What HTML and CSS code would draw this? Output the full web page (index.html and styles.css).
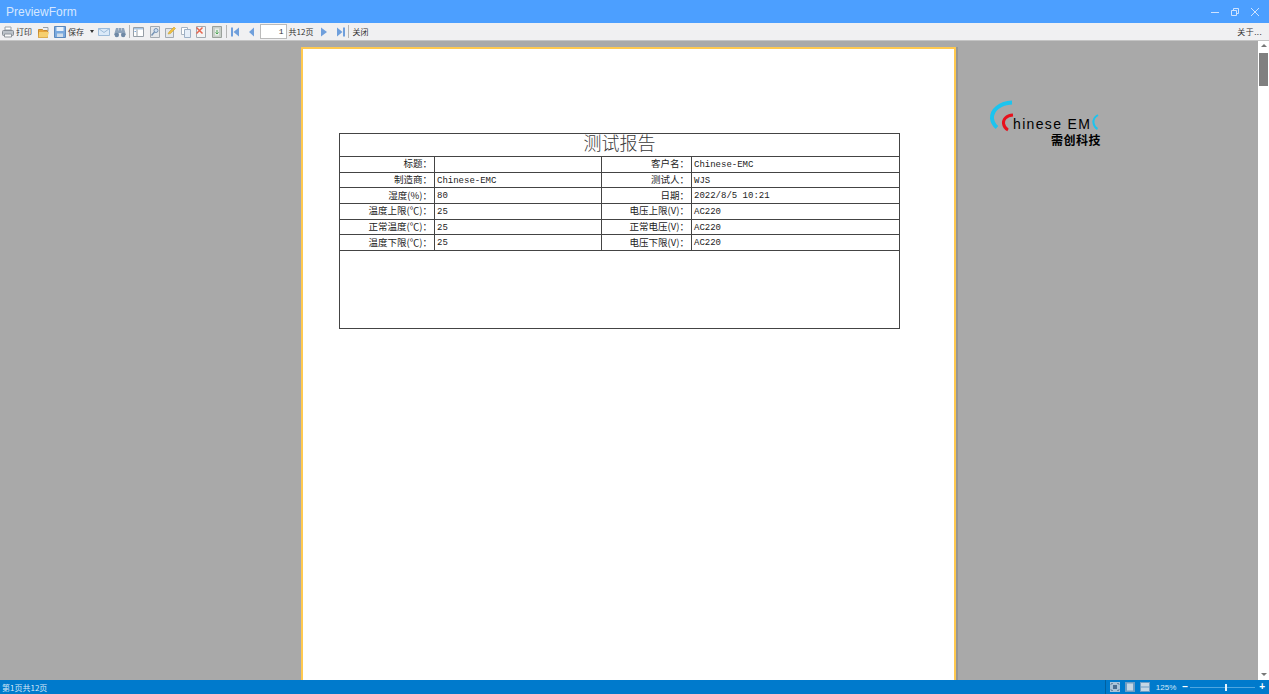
FILE: index.html
```html
<!DOCTYPE html>
<html lang="zh-CN">
<head>
  <meta charset="UTF-8">
  <meta name="viewport" content="width=device-width, initial-scale=1.0">
  <title>PreviewForm</title>
  <link rel="stylesheet" href="styles.css">
</head>
<body>
  <!-- 标题栏 -->
  <header class="title-bar">
    <span class="title-text">PreviewForm</span>
    <div class="win-btns">
      <svg width="10" height="10" viewBox="0 0 10 10"><path d="M1 5.500h8" stroke="#cfe3ff" fill="none"/></svg>
      <svg width="10" height="10" viewBox="0 0 10 10"><path d="M1.500 3.500h5v5h-5zM3.500 3.500v-2h5v5h-2" stroke="#cfe3ff" fill="none"/></svg>
      <svg width="10" height="10" viewBox="0 0 10 10"><path d="M1 1l8 8M9 1l-8 8" stroke="#cfe3ff" fill="none"/></svg>
    </div>
  </header>

  <!-- 工具栏 -->
  <nav class="toolbar">
    <div class="tb-btn tb-label">
      <svg width="12" height="12" viewBox="0 0 12 12"><path d="M3 1h6v3H3z" fill="#fff" stroke="#9aa0a6"/><rect x=".5" y="4.500" width="11" height="5" rx="1" fill="#bcc2c9" stroke="#868d95"/><path d="M2.500 8h7v3h-7z" fill="#f8f8f8" stroke="#8f959c"/></svg>
      <span>打印</span>
    </div>
    <div class="tb-btn">
      <svg width="12" height="12" viewBox="0 0 12 12"><path d="M.5 3.500h4l1 1h4v7h-9z" fill="#e8a33a" stroke="#c58a30"/><path d="M5 1.500h5v4" fill="none" stroke="#9aa0a6"/><path d="M1 6h10l-1.500 5.500h-9z" fill="#f6cf6f"/></svg>
    </div>
    <div class="tb-btn tb-label">
      <svg width="12" height="12" viewBox="0 0 12 12"><path d="M.5.500h11v11H.5z" fill="#7aa9de" stroke="#5a88bd"/><path d="M2.500 1h7v4h-7z" fill="#e9f1fa"/><path d="M3 7.500h6V11H3z" fill="#cfdcea"/></svg>
      <span>保存</span>
    </div>
    <div class="tb-btn tb-arrow"><span class="tri-down"></span></div>
    <div class="tb-btn">
      <svg width="12" height="12" viewBox="0 0 12 12"><path d="M.5 2.500h11v7H.5z" fill="#dbe9f8" stroke="#9dbbd9"/><path d="M.5 2.500L6 6.500l5.500-4" fill="none" stroke="#9dbbd9"/></svg>
    </div>
    <div class="tb-btn">
      <svg width="12" height="12" viewBox="0 0 12 12"><path d="M2 2h2.500v2.500H5V2h2v2.500h.5V2H10l2 7H7.500V7h-3v2H0z" fill="#8ea3bb"/><circle cx="2.800" cy="9" r="2.200" fill="#6f88a5"/><circle cx="9.200" cy="9" r="2.200" fill="#6f88a5"/></svg>
    </div>
    <span class="tb-sep"></span>
    <div class="tb-group">
      <div class="tb-btn">
        <svg width="12" height="12" viewBox="0 0 12 12"><path d="M.5 1.500h10v9H.5z" fill="#fff" stroke="#969ea6"/><path d="M1 2h9v1.500H1z" fill="#a9c6e4"/><path d="M4 3.500v7" stroke="#969ea6"/><path d="M1.500 5h1.500v1H1.500z" fill="#7aa9de"/></svg>
      </div>
      <div class="tb-btn">
        <svg width="12" height="12" viewBox="0 0 12 12"><path d="M1.500.500h9v11h-9z" fill="#e4e7ea" stroke="#a3aab1"/><circle cx="7" cy="4.500" r="2" fill="#cfe0f2" stroke="#7593b5"/><path d="M5.500 6L2.500 9.500" stroke="#7593b5" stroke-width="1.500"/></svg>
      </div>
      <div class="tb-btn">
        <svg width="12" height="12" viewBox="0 0 12 12"><path d="M1.500 2.500h8v9h-8z" fill="#e4e7ea" stroke="#a3aab1"/><path d="M4 8l1-2 5-5 1.500 1.500-5 5z" fill="#f0c040" stroke="#c9a238" stroke-width=".6"/></svg>
      </div>
      <div class="tb-btn">
        <svg width="12" height="12" viewBox="0 0 12 12"><path d="M1.500 1.500h6v7h-6z" fill="#fff" stroke="#a9b4c1"/><path d="M4.500 3.500h6v8h-6z" fill="#e6eef8" stroke="#9db0c6"/></svg>
      </div>
      <div class="tb-btn">
        <svg width="12" height="12" viewBox="0 0 12 12"><path d="M1.500.500h9v11h-9z" fill="#f4f4f4" stroke="#a3aab1"/><path d="M1.500 1.500l6 6M7.500 1.500l-6 6" stroke="#e8654f" stroke-width="1.500"/></svg>
      </div>
      <div class="tb-btn">
        <svg width="12" height="12" viewBox="0 0 12 12"><path d="M1.500.500h9v11h-9z" fill="#c9cfc9" stroke="#9ba19b"/><path d="M4 2.500h4v7H4z" fill="#e8ece8"/><path d="M6 4v4M4.500 6.500L6 8l1.500-1.500" stroke="#4ea654" fill="none"/></svg>
      </div>
    </div>
    <span class="tb-sep tb-sep-page"></span>
    <div class="tb-btn tb-nav tb-first">
      <svg width="10" height="12" viewBox="0 0 10 12"><path d="M1 1.500h2v9H1z" fill="#6f9fdc"/><path d="M9 1.500v9L3.500 6z" fill="#6f9fdc"/></svg>
    </div>
    <div class="tb-btn tb-nav">
      <svg width="10" height="12" viewBox="0 0 10 12"><path d="M7 1.500v9L2 6z" fill="#6f9fdc"/></svg>
    </div>
    <div class="tb-input">1</div>
    <span class="tb-pages">共12页</span>
    <div class="tb-btn tb-nav tb-next">
      <svg width="10" height="12" viewBox="0 0 10 12"><path d="M1 1.500v9L7 6z" fill="#6f9fdc"/></svg>
    </div>
    <div class="tb-btn tb-nav">
      <svg width="10" height="12" viewBox="0 0 10 12"><path d="M1 1.500v9L6.500 6z" fill="#6f9fdc"/><path d="M7 1.500h2v9H7z" fill="#6f9fdc"/></svg>
    </div>
    <span class="tb-sep tb-sep-end"></span>
    <span class="tb-close">关闭</span>
    <span class="tb-about">关于...</span>
  </nav>

  <!-- 预览区 -->
  <main class="viewer">
    <div class="canvas">
      <section class="page">
        <table class="report">
          <colgroup>
            <col class="col-a"><col class="col-b"><col class="col-c"><col class="col-d">
          </colgroup>
          <tr class="row-title"><td colspan="4">测试报告</td></tr>
          <tr><td class="lbl">标题：</td><td class="val"></td><td class="lbl">客户名：</td><td class="val">Chinese-EMC</td></tr>
          <tr><td class="lbl">制造商：</td><td class="val">Chinese-EMC</td><td class="lbl">测试人：</td><td class="val">WJS</td></tr>
          <tr><td class="lbl">湿度(%)：</td><td class="val">80</td><td class="lbl">日期：</td><td class="val">2022/8/5 10:21</td></tr>
          <tr><td class="lbl">温度上限(℃)：</td><td class="val">25</td><td class="lbl">电压上限(V)：</td><td class="val">AC220</td></tr>
          <tr><td class="lbl">正常温度(℃)：</td><td class="val">25</td><td class="lbl">正常电压(V)：</td><td class="val">AC220</td></tr>
          <tr><td class="lbl">温度下限(℃)：</td><td class="val">25</td><td class="lbl">电压下限(V)：</td><td class="val">AC220</td></tr>
          <tr class="row-blank"><td colspan="4"></td></tr>
        </table>
      </section>
      <div class="logo">
        <svg class="logo-arcs" width="120" height="50" viewBox="0 0 120 50">
          <path d="M24 2.500C12 3 3.500 10 4 18.500C4.500 22 6 25 9 27.500" fill="none" stroke="#1cc4ef" stroke-width="4"/>
          <path d="M25 15C18 15.500 15 19.500 15.500 23.500C16 27 18 29 20 30" fill="none" stroke="#e8101c" stroke-width="3"/>
          <path d="M110 15C106.500 17 105 20 105.500 23C106 26 107.500 28 109.500 29" fill="none" stroke="#1cc4ef" stroke-width="2"/>
        </svg>
        <div class="logo-en">hinese EM</div>
        <div class="logo-cn">需创科技</div>
      </div>
    </div>
    <aside class="scrollbar">
      <span class="tri-up"></span>
      <div class="scroll-thumb"></div>
      <span class="tri-down tri-gray"></span>
    </aside>
  </main>

  <!-- 状态栏 -->
  <footer class="status-bar">
    <span class="status-text">第1页共12页</span>
    <div class="status-right">
      <span class="status-sep"></span>
      <svg width="10" height="10" viewBox="0 0 10 10"><rect width="10" height="10" fill="#a9c2d8"/><path d="M2.500 1L1 2.500M7.500 1L9 2.500M2.500 9L1 7.500M7.500 9L9 7.500" stroke="#33506e"/><rect x="3" y="3" width="4" height="4" fill="#4a6d90"/></svg>
      <svg width="10" height="10" viewBox="0 0 10 10"><rect width="10" height="10" fill="#6f9dc4"/><rect x="2" y="1.500" width="6" height="7" fill="#c6d6e4"/></svg>
      <svg width="10" height="10" viewBox="0 0 10 10"><rect width="10" height="10" fill="#6f9dc4"/><rect x="1" y="1" width="8" height="3.500" fill="#c6d6e4"/><rect x="1" y="5.500" width="8" height="3.500" fill="#c6d6e4"/></svg>
      <span class="zoom-text">125%</span>
      <span class="zoom-minus">−</span>
      <div class="zoom-track"><span class="zoom-thumb"></span></div>
      <span class="zoom-plus">+</span>
    </div>
  </footer>
</body>
</html>
```

FILE: styles.css
```css
* {
  box-sizing: border-box;
}
html, body {
  height: 100%;
}
body {
  margin: 0;
  display: flex;
  flex-direction: column;
  overflow: hidden;
  font-family: "Noto Sans CJK SC", sans-serif;
  background: #a9a9a9;
}
.title-bar {
  height: 23px;
  background: #4c9fff;
  display: flex;
  align-items: center;
  justify-content: space-between;
  padding: 0 9px 0 6px;
}
.title-text {
  font-family: "Liberation Sans", sans-serif;
  font-size: 12px;
  color: #d5e7ff;
}
.win-btns {
  display: flex;
  gap: 10px;
}
.toolbar {
  height: 18px;
  background: #f0f0f2;
  border-bottom: 1px solid #c4c4c4;
  display: flex;
  align-items: center;
  font-size: 8px;
  color: #333;
  padding-right: 7px;
}
.tb-btn {
  width: 16px;
  padding-left: 2px;
  display: flex;
  align-items: center;
  flex: none;
}
.tb-label {
  width: auto;
  padding-right: 4px;
  gap: 2px;
}
.tb-arrow {
  width: 8px;
  padding-left: 2px;
}
.tb-group {
  display: flex;
}
.tb-group .tb-btn {
  width: 15.6px;
}
.tb-sep {
  width: 1px;
  height: 13px;
  background: #b4b4b4;
  margin: 0 1px;
  flex: none;
}
.tb-sep-page {
  margin: 0 2px 0 1px;
}
.tb-sep-end {
  margin: 0;
}
.tb-nav {
  width: 14px;
  margin-left: 2px;
}
.tb-first {
  margin-left: 0;
  padding-left: 1px;
}
.tb-next {
  margin-left: 5px;
}
.tb-input {
  width: 27px;
  height: 15px;
  margin-left: 1px;
  background: #fff;
  border: 1px solid #bbb;
  text-align: right;
  padding-right: 2px;
  line-height: 13px;
  font-family: "Liberation Mono", monospace;
}
.tb-pages {
  margin-left: 2px;
}
.tb-close {
  margin-left: 3px;
}
.tb-about {
  margin-left: auto;
  letter-spacing: .4px;
}
.tri-down {
  display: block;
  width: 0;
  height: 0;
  border: 2px solid transparent;
  border-top: 3px solid #333;
  border-bottom: 0;
}
.tri-up {
  display: block;
  width: 0;
  height: 0;
  border: 3px solid transparent;
  border-bottom: 3px solid #777;
  border-top: 0;
}
.tri-gray {
  border-width: 3px 3px 0;
  border-top-color: #777;
}

.viewer {
  flex: 1;
  display: flex;
  min-height: 0;
}
.canvas {
  flex: 1;
  position: relative;
  overflow: hidden;
  padding: 6px 0 0 301px;
  background: #a9a9a9;
}
.page {
  width: 655px;
  height: 700px;
  background: #fff;
  border: 2px solid #ffc94f;
  border-bottom: 0;
  box-shadow: 2px 0 0 #969696;
  padding: 84px 0 0 36px;
}
.report {
  width: 560px;
  border-collapse: collapse;
  table-layout: fixed;
  font-size: 9px;
  color: #222;
}
.col-a {
  width: 95px;
}
.col-b {
  width: 167px;
}
.col-c {
  width: 90px;
}
.col-d {
  width: 208px;
}
.report td {
  border: 1px solid #444;
  padding: 0;
  height: 15.7px;
  line-height: 12px;
  white-space: nowrap;
}
.report td.lbl {
  text-align: right;
  font-size: 9.5px;
  padding: 0 2px 2px 0;
}
.report td.val {
  padding: 1px 0 0 2px;
  font-family: "Liberation Mono", monospace;
}
.report .row-title td {
  height: 23px;
  text-align: center;
  font-size: 18px;
  font-weight: 300;
  line-height: 16px;
  padding-bottom: 6px;
  color: #3a3a3a;
}
.report .row-blank td {
  height: 78px;
}
.logo {
  position: absolute;
  left: 988px;
  top: 59px;
  width: 120px;
  height: 50px;
  padding: 16px 0 0 25px;
  color: #000;
}
.logo-arcs {
  position: absolute;
  left: 0;
  top: 0;
}
.logo-en {
  font-family: "Liberation Sans", sans-serif;
  font-size: 14px;
  line-height: 16px;
  letter-spacing: 1.35px;
  white-space: nowrap;
}
.logo-cn {
  font-size: 12px;
  font-weight: 700;
  line-height: 14px;
  margin: 1px 0 0 38px;
  letter-spacing: .5px;
  white-space: nowrap;
}
.scrollbar {
  width: 11px;
  background: #fff;
  display: flex;
  flex-direction: column;
  align-items: center;
  padding: 3px 0 4px;
}
.scroll-thumb {
  width: 9px;
  height: 33px;
  margin-top: 6px;
  background: #808080;
}
.scrollbar .tri-gray {
  margin-top: auto;
}

.status-bar {
  height: 14px;
  background: #007acc;
  display: flex;
  align-items: center;
  justify-content: space-between;
  padding: 0 4px 0 2px;
  font-size: 8px;
  color: #d4e9f8;
}
.status-right {
  display: flex;
  align-items: center;
  gap: 5px;
}
.status-sep {
  width: 1px;
  height: 14px;
  margin-right: -1px;
  background: #0060a0;
}
.zoom-text {
  font-family: "Liberation Sans", sans-serif;
  margin-left: 1px;
}
.zoom-minus, .zoom-plus {
  font-family: "Liberation Sans", sans-serif;
  font-size: 10px;
  font-weight: 700;
  line-height: 10px;
  color: #fff;
}
.zoom-minus {
  margin-left: 1px;
}
.zoom-track {
  width: 65px;
  height: 1px;
  margin: 0 -1px 0 -3px;
  background: #4fa6e0;
  display: flex;
  align-items: center;
  padding-left: 35px;
}
.zoom-thumb {
  width: 2px;
  height: 7px;
  background: #e8f3fb;
}
```
